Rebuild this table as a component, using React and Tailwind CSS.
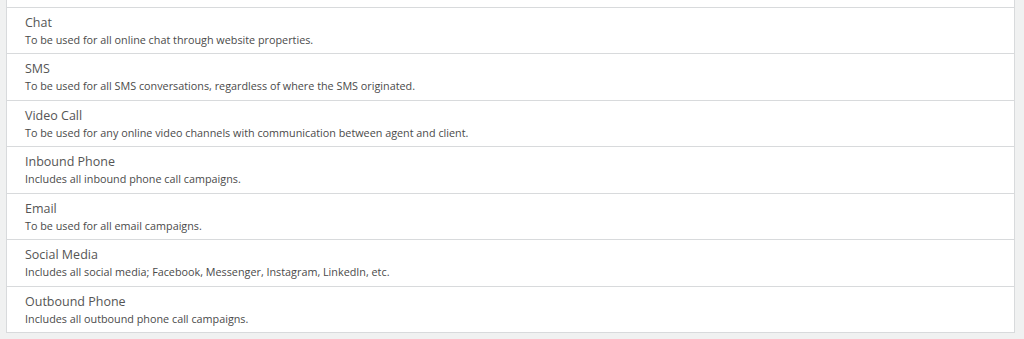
const channels = [
  { name: 'Chat', desc: 'To be used for all online chat through website properties.' },
  { name: 'SMS', desc: 'To be used for all SMS conversations, regardless of where the SMS originated.' },
  { name: 'Video Call', desc: 'To be used for any online video channels with communication between agent and client.' },
  { name: 'Inbound Phone', desc: 'Includes all inbound phone call campaigns.' },
  { name: 'Email', desc: 'To be used for all email campaigns.' },
  { name: 'Social Media', desc: 'Includes all social media; Facebook, Messenger, Instagram, LinkedIn, etc.' },
  { name: 'Outbound Phone', desc: 'Includes all outbound phone call campaigns.' },
];

export default function App() {
  return (
    <div className="h-[339px] bg-[#f0f1f1] pl-[6px] pr-[9px] font-['Open_Sans',sans-serif]">
      <div className="bg-white border-x border-b border-[#d8dadc]">
        {/* tail of the row above */}
        <div className="h-[7px]"></div>
        {channels.map((c) => (
          <div key={c.name} className="h-[46.43px] border-t border-[#d8dadc] pl-[18px] pt-[5px]">
            <div className="text-[12.5px] leading-[19px] text-[#555]">{c.name}</div>
            <div className="text-[10.8px] leading-[15px] text-[#4a4a4a]">{c.desc}</div>
          </div>
        ))}
      </div>
    </div>
  );
}
